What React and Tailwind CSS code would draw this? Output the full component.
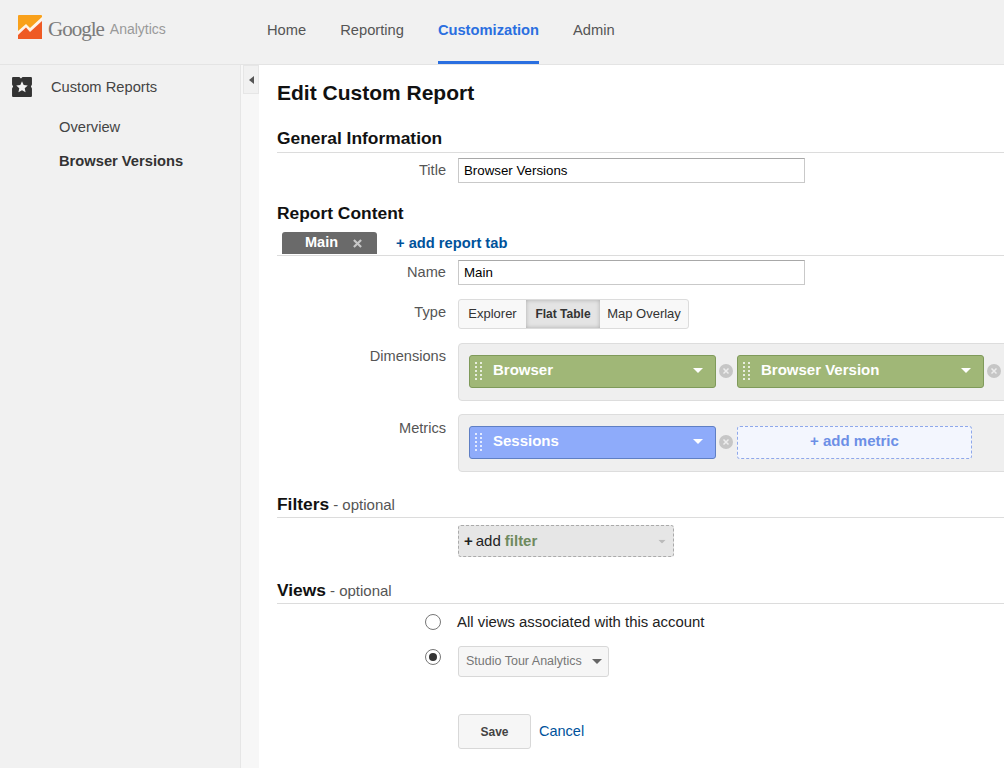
import React from "react";

const Caret = ({ className }) => (
  <svg width="10" height="5" viewBox="0 0 10 5" className={className}>
    <path d="M0 0h10L5 5z" fill="currentColor" />
  </svg>
);

const Grip = () => (
  <svg width="8" height="18" viewBox="0 0 8 18" className="shrink-0">
    {[0, 4, 8, 12, 16].flatMap((y) =>
      [0, 5].map((x) => <rect key={`${x}-${y}`} x={x} y={y} width="2" height="2" fill="#fff" fillOpacity="0.75" />)
    )}
  </svg>
);

const Remove = () => (
  <svg width="14" height="14" viewBox="0 0 14 14" className="shrink-0">
    <circle cx="7" cy="7" r="7" fill="#c6c6c6" />
    <path d="M4.5 4.5l5 5M9.5 4.5l-5 5" stroke="#ededed" strokeWidth="1.5" />
  </svg>
);

const Pill = ({ label, color }) => (
  <div className={`flex h-[33px] w-[247px] shrink-0 items-center rounded-[3px] border pb-[1px] pl-[5px] pr-[12px] text-[15px] font-bold text-white ${color}`}>
    <Grip />
    <span className="ml-[10px] flex-1">{label}</span>
    <Caret className="text-white" />
  </div>
);

const Row = ({ label, className, labelClass, children }) => (
  <div className={`flex ${className}`}>
    <div className={`w-[169px] shrink-0 text-right text-[14.6px] text-[#555] ${labelClass}`}>{label}</div>
    <div className="ml-[12px] min-w-0 flex-1">{children}</div>
  </div>
);

const Section = ({ title, optional, className }) => (
  <div className={`flex items-end border-b border-[#dcdcdc] ${className}`}>
    <h2 className="text-[17.4px] font-bold leading-[20px] text-[#111]">{title}</h2>
    {optional && <span className="ml-[4px] text-[15px] leading-[19px] text-[#555]">- optional</span>}
  </div>
);

const TextBox = ({ value }) => (
  <div className="flex h-[25px] w-[347px] items-center border border-[#c9c9c9] border-t-[#a8a8a8] bg-white pl-[5px] text-[13.3px] text-black">
    {value}
  </div>
);

const Radio = ({ checked }) => (
  <div className="flex h-[16px] w-[16px] items-center justify-center rounded-full border border-[#777] bg-white">
    {checked && <div className="h-[8px] w-[8px] rounded-full bg-[#333]" />}
  </div>
);

export default function App() {
  return (
    <div className="flex h-[768px] w-[1004px] flex-col overflow-hidden bg-white font-['Liberation_Sans',Arial,sans-serif]">
      <header className="flex h-[65px] shrink-0 border-b border-[#e4e4e4] bg-[#f1f1f1]">
        <div className="flex w-[267px] shrink-0 items-start pl-[18px] pt-[15px]">
          <svg width="24" height="24" viewBox="0 0 24 24" className="shrink-0">
            <rect width="24" height="24" rx="1" fill="#f9a11b" />
            <path d="M0 24V18L8 11L12 16L24 4V24Z" fill="#ef5a24" />
            <path d="M0 16L8 9L12 13L24 2V6L12 17L8 12.5L0 20Z" fill="#fff" fillOpacity="0.9" />
          </svg>
          <span className="ml-[6px] font-['Liberation_Serif',serif] text-[21px] leading-[28px] tracking-[-1px] text-[#7b7b7b]">Google</span>
          <span className="ml-[6px] mt-[4px] text-[14px] leading-[20px] text-[#999]">Analytics</span>
        </div>
        <nav className="flex text-[14.7px] text-[#555]">
          <a className="flex h-[64px] items-center pb-[4px]">Home</a>
          <a className="ml-[34px] flex h-[64px] items-center pb-[4px]">Reporting</a>
          <a className="ml-[34px] flex h-[64px] items-center border-b-[3px] border-[#2a6fe0] pb-[1px] font-bold text-[#2a6fe0]">Customization</a>
          <a className="ml-[34px] flex h-[64px] items-center pb-[4px]">Admin</a>
        </nav>
      </header>

      <div className="flex min-h-0 flex-1">
        <aside className="w-[241px] shrink-0 border-r border-[#e6e6e6] bg-[#f1f1f1] text-[14.7px] text-[#444]">
          <div className="flex h-[44px] items-center pl-[11px]">
            <svg width="22" height="22" viewBox="0 0 21 21" className="shrink-0">
              <path d="M2 1h6l1.5 1.5L11 1h8a1 1 0 0 1 1 1v6l-1 2 1 2v7a1 1 0 0 1-1 1H2a1 1 0 0 1-1-1v-7l1-2-1-2V2a1 1 0 0 1 1-1z" fill="#333" />
              <path d="M10.5 5l1.6 3.6 3.9.4-2.9 2.6.8 3.9-3.4-2-3.4 2 .8-3.9L5 9l3.9-.4z" fill="#f1f1f1" />
            </svg>
            <span className="ml-[18px]">Custom Reports</span>
          </div>
          <div className="mt-[1px] flex h-[34px] items-center pl-[59px]">Overview</div>
          <div className="flex h-[34px] items-center pl-[59px] font-bold text-[#333]">Browser Versions</div>
        </aside>

        <div className="w-[18px] shrink-0 bg-[#f7f7f7]">
          <div className="ml-[2px] flex h-[29px] w-[16px] items-center justify-center border border-[#e6e6e6] bg-[#f1f1f1]">
            <svg width="5" height="8" viewBox="0 0 5 8"><path d="M5 0v8L0 4z" fill="#555" /></svg>
          </div>
        </div>

        <main className="min-w-0 flex-1 overflow-hidden pl-[18px]">
          <h1 className="mt-[15px] h-[26px] text-[21px] font-bold leading-[26px] text-[#111]">Edit Custom Report</h1>

          <Section title="General Information" className="mt-[22px] h-[25px] pb-[4px]" />
          <Row label="Title" className="mt-[5px] h-[25px] items-center">
            <TextBox value="Browser Versions" />
          </Row>

          <h2 className="mt-[20px] h-[21px] text-[17.4px] font-bold leading-[20px] text-[#111]">Report Content</h2>
          <div className="mt-[8px] flex h-[24px] items-start border-b border-[#dcdcdc]">
            <div className="ml-[5px] flex h-[22px] w-[95px] items-center rounded-t-[3px] bg-[#6a6a6a] pl-[23px] text-[14.5px] font-bold text-white">
              Main
              <svg width="9" height="9" viewBox="0 0 10 10" className="ml-[15px]">
                <path d="M1 1l8 8M9 1l-8 8" stroke="#c8c8c8" strokeWidth="2.4" />
              </svg>
            </div>
            <span className="ml-[19px] text-[14.7px] font-bold leading-[22px] text-[#00529b]">+ add report tab</span>
          </div>

          <Row label="Name" className="mt-[4px] h-[25px] items-center">
            <TextBox value="Main" />
          </Row>

          <Row label="Type" className="mt-[14px] h-[30px]" labelClass="leading-[26px]">
            <div className="flex h-[30px] w-[231px] rounded-[3px] border border-[#dcdcdc] bg-[#f8f8f8] text-[13px] text-[#333]">
              <span className="flex w-[67px] items-center justify-center">Explorer</span>
              <span className="flex w-[74px] items-center justify-center bg-[#e4e4e4] text-[12px] font-bold text-[#333] shadow-[inset_0_0_4px_#aaa]">Flat Table</span>
              <span className="flex flex-1 items-center justify-center">Map Overlay</span>
            </div>
          </Row>

          <Row label="Dimensions" className="mt-[14px] h-[58px]" labelClass="pt-[3px]">
            <div className="flex h-[58px] w-[600px] items-center rounded-[4px] border border-[#dddddd] bg-[#efefef] pb-[2px] pl-[10px]">
              <Pill label="Browser" color="border-[#7f9a5a] bg-[#a0b777]" />
              <span className="ml-[3px]"><Remove /></span>
              <span className="ml-[4px]"><Pill label="Browser Version" color="border-[#7f9a5a] bg-[#a0b777]" /></span>
              <span className="ml-[3px]"><Remove /></span>
            </div>
          </Row>

          <Row label="Metrics" className="mt-[13px] h-[58px]" labelClass="pt-[4px]">
            <div className="flex h-[58px] w-[600px] items-center rounded-[4px] border border-[#dddddd] bg-[#efefef] pb-[2px] pl-[10px]">
              <Pill label="Sessions" color="border-[#5f7fc4] bg-[#8eabfa]" />
              <span className="ml-[3px]"><Remove /></span>
              <div className="ml-[4px] flex h-[33px] w-[235px] items-center justify-center rounded-[3px] border border-dashed border-[#8fa8ea] bg-[#f3f6fe] pb-[1px] text-[15px] font-bold text-[#6c8fe6]">
                + add metric
              </div>
            </div>
          </Row>

          <Section title="Filters" optional className="mt-[22px] h-[24px] pb-[3px]" />
          <div className="ml-[181px] mt-[7px] flex h-[32px] w-[216px] items-center rounded-[3px] border border-dashed border-[#aaa] bg-[#e6e6e6] pl-[5px] pr-[6px] text-[15px] text-[#222]">
            <span className="font-bold">+</span>
            <span className="ml-[3px]">add</span>
            <span className="ml-[4px] flex-1 font-bold text-[#6f8a5e]">filter</span>
            <Caret className="scale-75 text-[#bbb]" />
          </div>

          <Section title="Views" optional className="mt-[23px] h-[24px] pb-[3px]" />
          <div className="mt-[9px] flex h-[18px] items-center">
            <div className="ml-[148px]"><Radio /></div>
            <span className="ml-[16px] text-[14.9px] text-[#222]">All views associated with this account</span>
          </div>
          <div className="mt-[15px] flex h-[31px] items-start">
            <div className="ml-[148px] mt-[3px]"><Radio checked /></div>
            <div className="ml-[17px] flex h-[31px] w-[151px] items-center rounded-[3px] border border-[#d8d8d8] bg-[#f6f6f6] pl-[7px] text-[12.5px] text-[#777]">
              Studio Tour Analytics
              <Caret className="ml-[10px] text-[#666]" />
            </div>
          </div>

          <div className="ml-[181px] mt-[37px] flex h-[35px] items-center">
            <div className="flex h-[35px] w-[73px] items-center justify-center rounded-[3px] border border-[#d8d8d8] bg-[#f6f6f6] text-[12px] font-bold text-[#444]">Save</div>
            <a className="ml-[8px] text-[14.5px] text-[#00529b]">Cancel</a>
          </div>
        </main>
      </div>
    </div>
  );
}
